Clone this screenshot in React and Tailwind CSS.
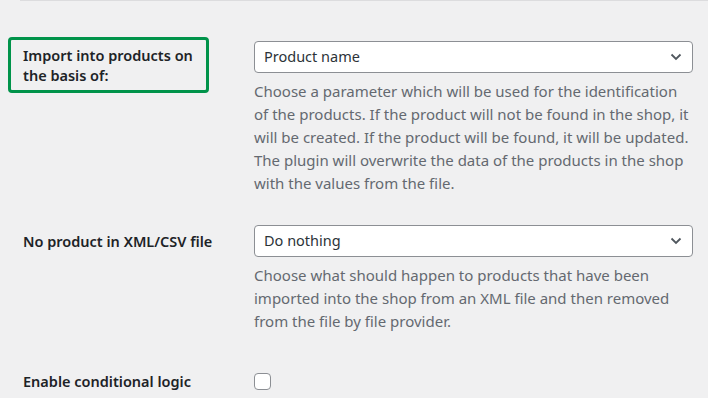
import React from 'react';

const font = { fontFamily: '"Noto Sans", "Liberation Sans", sans-serif' };

const Chevron = () => (
    <svg width="12" height="8" viewBox="0 0 12 8" className="shrink-0">
        <path d="M1.5 1.5 L6 6 L10.5 1.5" fill="none" stroke="#50575e" strokeWidth="1.8" />
    </svg>
);

const Select = ({ value }) => (
    <div className="flex items-center justify-between h-[32px] w-[439px] bg-white border border-[#8c8f94] rounded-[4px] pl-[9px] pr-[10px] text-[14.5px] text-[#2c3338]">
        <span>{value}</span>
        <Chevron />
    </div>
);

const Desc = ({ children }) => (
    <p className="mt-[7px] w-[439px] text-[15px] leading-[23px] text-[#646970]">{children}</p>
);

const App = () => {
    return (
        <div className="w-[708px] h-[398px] bg-[#f0f0f1] overflow-hidden text-[#1d2327]" style={font}>
            <div className="ml-[20px] h-px bg-[#dcdcde]"></div>

            <div className="flex pt-[40px]">
                <div className="w-[254px] shrink-0 pl-[8px] -mt-[4px]">
                    <div className="w-[201px] h-[56px] border-[3px] border-[#00934a] rounded-[4px] pl-[12px] pt-[5px] text-[14.5px] leading-[20px] font-semibold">
                        Import into products on<br />the basis of:
                    </div>
                </div>
                <div>
                    <Select value="Product name" />
                    <Desc>
                        Choose a parameter which will be used for the identification of the products. If the product will not be found in the shop, it will be created. If the product will be found, it will be updated. The plugin will overwrite the data of the products in the shop with the values from the file.
                    </Desc>
                </div>
            </div>

            <div className="flex pt-[30px]">
                <div className="w-[254px] shrink-0 pl-[23px] pt-[6px] text-[14.5px] leading-[20px] font-semibold">
                    No product in XML/CSV file
                </div>
                <div>
                    <Select value="Do nothing" />
                    <Desc>
                        Choose what should happen to products that have been imported into the shop from an XML file and then removed from the file by file provider.
                    </Desc>
                </div>
            </div>

            <div className="flex items-center pt-[38px]">
                <div className="w-[254px] shrink-0 pl-[23px] text-[14.5px] leading-[20px] font-semibold">
                    Enable conditional logic
                </div>
                <div className="w-[17px] h-[17px] bg-white border border-[#8c8f94] rounded-[4px]"></div>
            </div>
        </div>
    );
};

export default App;
